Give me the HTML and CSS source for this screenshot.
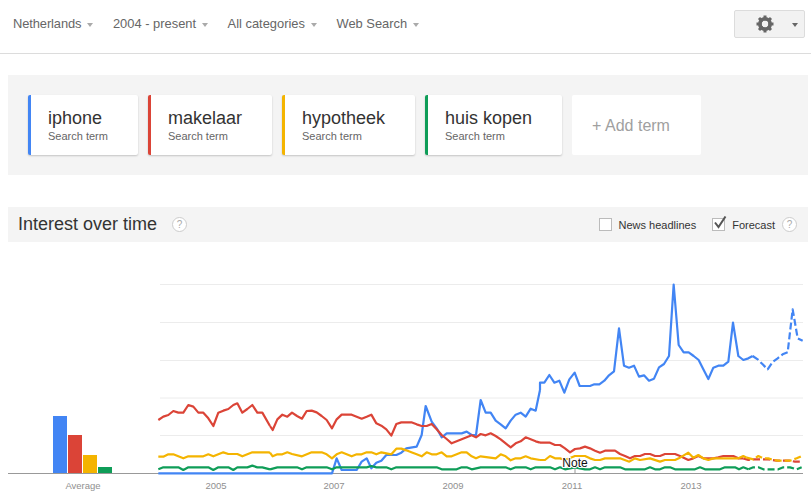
FILE: index.html
```html
<!DOCTYPE html>
<html lang="en">
<head>
    <meta charset="UTF-8">
    <meta name="viewport" content="width=device-width, initial-scale=1.0">
    <title>Google Trends</title>
    <link rel="stylesheet" href="styles.css">
</head>
<body>
    <header class="topbar">
        <div class="filter first">Netherlands<span class="caret"></span></div>
        <div class="filter">2004 - present<span class="caret"></span></div>
        <div class="filter">All categories<span class="caret"></span></div>
        <div class="filter">Web Search<span class="caret"></span></div>
        <button class="settings">
            <svg class="gear" viewBox="0 0 18 18" width="18" height="18">
                <circle cx="9" cy="9" r="5.2" fill="none" stroke="#666" stroke-width="3.6"/>
                <path d="M9 0.5V17.5M0.5 9H17.5M3 3L15 15M15 3L3 15" stroke="#666" stroke-width="3" fill="none" mask="url(#gearHole)"/>
                <mask id="gearHole">
                    <rect width="18" height="18" fill="#fff"/>
                    <circle cx="9" cy="9" r="3.4" fill="#000"/>
                </mask>
            </svg>
            <span class="caret dark"></span>
        </button>
    </header>

    <section class="terms">
        <div class="term blue"><div class="term-name">iphone</div><div class="term-type">Search term</div></div>
        <div class="term red"><div class="term-name">makelaar</div><div class="term-type">Search term</div></div>
        <div class="term yellow"><div class="term-name">hypotheek</div><div class="term-type">Search term</div></div>
        <div class="term green"><div class="term-name">huis kopen</div><div class="term-type">Search term</div></div>
        <div class="term add">+ Add term</div>
    </section>

    <section class="section-head">
        <h2>Interest over time</h2>
        <span class="help title-help">?</span>
        <div class="options">
            <span class="checkbox"></span>
            <span class="option-label news">News headlines</span>
            <span class="checkbox">
                <svg viewBox="0 0 16 16" width="16" height="16"><path d="M3 6.5L6.5 11L13.5 0.5" fill="none" stroke="#555" stroke-width="2"/></svg>
            </span>
            <span class="option-label">Forecast</span>
            <span class="help">?</span>
        </div>
    </section>

    <svg class="chart" viewBox="0 242 811 258" width="811" height="258">
        <g class="grid">
            <line x1="160" x2="803" y1="284.5" y2="284.5"/>
            <line x1="160" x2="803" y1="322.5" y2="322.5"/>
            <line x1="160" x2="803" y1="360.5" y2="360.5"/>
            <line x1="160" x2="803" y1="398" y2="398"/>
            <line x1="160" x2="803" y1="435.5" y2="435.5"/>
        </g>
        <line class="axis" x1="8" x2="803" y1="473.5" y2="473.5"/>

        <rect x="53" y="416" width="14" height="57" fill="#4285f4"/>
        <rect x="68" y="435" width="14" height="38" fill="#db4437"/>
        <rect x="83" y="455" width="14" height="18" fill="#f4b400"/>
        <rect x="98" y="467" width="14" height="6" fill="#0f9d58"/>

        <!-- series are traced in 3x crop coordinates, one group per crop -->
        <g transform="translate(0 390) scale(.33333)">
            <polyline class="s-blue" points="475,250 810,250"/>
            <polyline class="s-red" points="475,90 490,80 505,75 520,63 535,68 550,68 565,45 580,50 595,68 610,68 625,85 640,108 655,68 670,62 685,57 700,45 712,40 727,68 742,57 757,45 772,68 787,68 810,108"/>
            <polyline class="s-yellow" points="475,200 490,200 505,193 520,193 535,199 550,205 565,199 610,199 625,193 640,199 655,193 670,187 685,192 712,192 727,199 742,193 757,187 805,187 810,188"/>
            <polyline class="s-green" points="475,238 490,232 535,232 550,240 565,232 625,232 640,240 655,232 685,232 700,240 712,232 742,232 757,227 772,232 787,232 810,238"/>
        </g>
        <g transform="translate(270 390) scale(.33333)">
            <polyline class="s-blue" points="0,250 186,250 200,205 215,240 260,240 275,215 290,205 304,235 319,218 334,212 349,195 379,195 394,188 409,175 440,170 455,135 467,48 485,95 500,115 515,142 530,130 575,130 590,125 605,135 618,135 632,30 647,68 662,68 677,92 692,103 707,115 722,92 737,74 752,68 767,80 782,56 797,62 810,0"/>
            <polyline class="s-red" points="0,108 8,120 22,88 37,74 52,80 66,68 81,78 96,86 110,63 125,62 140,67 155,78 170,90 186,115 200,88 215,74 245,74 260,80 275,86 290,80 304,74 319,100 334,107 349,118 364,137 379,102 394,97 424,97 440,103 455,108 470,108 485,102 500,118 515,135 530,147 545,160 560,154 575,148 590,142 605,136 618,142 632,132 647,136 662,130 677,138 692,148 707,160 722,172 737,160 752,154 767,142 782,148 797,154 810,158"/>
            <polyline class="s-yellow" points="0,188 8,199 22,193 37,193 52,187 66,192 96,199 125,187 155,187 170,193 186,205 200,193 215,187 245,199 260,193 275,193 290,187 304,187 319,193 334,187 364,193 379,176 394,176 409,181 424,187 440,193 455,199 470,187 485,193 500,193 515,187 530,199 545,199 560,193 575,187 590,187 605,199 618,205 632,199 677,205 692,193 707,199 722,211 737,205 752,205 767,199 782,205 810,210"/>
            <polyline class="s-green" points="0,238 22,232 81,232 96,238 110,232 170,232 186,238 200,232 290,232 304,228 319,232 349,232 364,238 379,232 500,232 515,238 560,238 575,232 590,232 605,238 632,232 707,232 722,238 737,232 767,232 782,238 797,232 810,232"/>
        </g>
        <g transform="translate(540 270) scale(.33333)">
            <polyline class="s-blue" points="0,360 0,338 13,338 28,315 43,338 58,332 73,368 88,328 104,308 119,348 150,348 163,343 178,343 193,332 207,316 222,304 237,175 252,287 267,293 282,287 297,320 312,316 327,332 342,326 357,292 372,282 387,258 401,44 416,225 431,247 446,247 461,258 476,270 490,298 505,327 520,293 535,287 550,287 565,275 579,158 595,258 610,270 625,265 638,258"/>
            <polyline class="s-blue dashed" points="638,258 653,268 668,283 683,298 698,276 713,265 728,253 743,247 758,118 773,205 788,212"/>
        </g>
        <g transform="translate(540 390) scale(.33333)">
            <polyline class="s-red" points="0,158 30,158 45,165 60,165 75,175 90,187 105,177 120,175 135,170 150,175 165,182 180,188 195,182 225,182 240,192 255,198 270,205 285,198 300,198 315,192 330,192 345,198 360,198 375,192 405,192 420,198 445,210 460,205 475,198 490,205 520,205 535,202 550,198 580,198 595,205 610,205"/>
            <polyline class="s-red dashed" points="610,205 625,210 640,208 685,208 710,212 750,212 765,215 785,215"/>
            <polyline class="s-yellow" points="0,210 15,210 30,198 45,205 60,205 75,210 105,198 135,198 150,205 165,210 180,210 195,205 240,205 268,215 285,205 300,210 330,205 360,215 375,210 405,210 420,203 445,188 460,203 475,195 490,205 505,210 520,205 595,205 610,198 620,203"/>
            <polyline class="s-yellow dashed" points="620,203 640,208 655,198 670,205 685,205 700,210 715,212 750,212 770,205 785,198"/>
            <polyline class="s-green" points="0,232 30,232 45,238 60,232 75,238 105,232 135,238 150,238 165,232 180,238 195,232 240,232 255,238 315,238 330,232 345,238 360,238 375,232 390,232 405,238 465,238 480,232 495,238 540,238 555,232 585,232 597,238 610,232 625,238"/>
            <polyline class="s-green dashed" points="625,238 640,232 655,232 670,238 715,238 730,232 750,232 770,238 785,232"/>
        </g>

        <line class="note-tick" x1="575" x2="575" y1="469" y2="473"/>
        <text class="note" x="575" y="467">Note</text>

        <g class="labels">
            <text x="83" y="488.5">Average</text>
            <text x="216" y="488.5">2005</text>
            <text x="334" y="488.5">2007</text>
            <text x="453" y="488.5">2009</text>
            <text x="572" y="488.5">2011</text>
            <text x="691" y="488.5">2013</text>
        </g>
    </svg>
</body>
</html>
```

FILE: styles.css
```css
html, body {
    margin: 0;
    padding: 0;
    height: 500px;
    overflow: hidden;
    background: #fff;
    font-family: 'Liberation Sans', Arial, sans-serif;
}

.topbar {
    display: flex;
    align-items: center;
    height: 47px;
    padding: 0 6px 6px 13px;
    border-bottom: 1px solid #dcdcdc;
    box-sizing: content-box;
}

.filter {
    display: flex;
    align-items: center;
    margin-right: 19.5px;
    font-size: 12.9px;
    color: #666;
}

.filter.first {
    letter-spacing: -0.1px;
}

.caret {
    display: inline-block;
    width: 0;
    height: 0;
    margin-left: 6px;
    margin-top: 2px;
    border-left: 3.5px solid transparent;
    border-right: 3.5px solid transparent;
    border-top: 4px solid #aaa;
}

.caret.dark {
    border-top-color: #666;
    margin-left: 0;
}

.settings {
    display: flex;
    align-items: center;
    justify-content: space-between;
    width: 71px;
    height: 28px;
    margin-left: auto;
    padding: 0 6px 0 21px;
    background: #f2f2f2;
    border: 1px solid #dcdcdc;
    border-radius: 2px;
    box-sizing: border-box;
}

.gear {
    display: block;
}

.terms {
    display: flex;
    gap: 10px;
    width: 800px;
    height: 100px;
    margin: 21px 0 32px 8px;
    padding: 20px;
    background: #f4f4f4;
    box-sizing: border-box;
}

.term {
    height: 60px;
    padding: 12px 30px 0 17px;
    background: #fff;
    border-left: 3px solid transparent;
    border-radius: 2px;
    box-shadow: 0 1px 2px rgba(0,0,0,0.2);
    box-sizing: border-box;
}

.term.blue { border-left-color: #4285f4; }
.term.red { border-left-color: #db4437; }
.term.yellow { border-left-color: #f4b400; }
.term.green { border-left-color: #0f9d58; }

.term-name {
    font-size: 18px;
    line-height: 22px;
    color: #333;
}

.term-type {
    font-size: 11px;
    line-height: 14px;
    color: #666;
}

.term.add {
    display: flex;
    align-items: center;
    padding: 2px 31px 0 20px;
    border-left: none;
    box-shadow: none;
    font-size: 16px;
    color: #a0a0a0;
}

.section-head {
    display: flex;
    align-items: center;
    width: 800px;
    height: 35px;
    margin-left: 8px;
    padding: 0 11px 0 10px;
    background: #f4f4f4;
    box-sizing: border-box;
}

h2 {
    margin: 0;
    font-size: 18px;
    font-weight: normal;
    color: #333;
}

.help {
    display: block;
    width: 13px;
    height: 13px;
    background: #fff;
    border: 1px solid #ccc;
    border-radius: 50%;
    font-size: 10px;
    line-height: 13px;
    text-align: center;
    color: #aaa;
}

.title-help {
    margin-left: 15px;
}

.options {
    display: flex;
    align-items: center;
    margin-left: auto;
}

.checkbox {
    display: block;
    position: relative;
    width: 11px;
    height: 11px;
    background: #fff;
    border: 1px solid #bbb;
}

.checkbox svg {
    position: absolute;
    left: -1px;
    top: -3px;
}

.option-label {
    margin-left: 7px;
    margin-right: 7px;
    font-size: 11px;
    color: #333;
}

.option-label.news {
    margin-right: 16px;
}

.chart {
    display: block;
}

.grid line {
    stroke: #ececec;
    stroke-width: 1;
}

.axis {
    stroke: #999;
    stroke-width: 1;
}

polyline {
    fill: none;
    stroke-width: 2.2;
    stroke-linejoin: round;
    vector-effect: non-scaling-stroke;
}

.s-blue { stroke: #4285f4; }
.s-red { stroke: #db4437; }
.s-yellow { stroke: #f4b400; }
.s-green { stroke: #0f9d58; }

.dashed {
    stroke-dasharray: 7 3;
}

.note {
    font-size: 12px;
    text-anchor: middle;
    fill: #111;
    stroke: #fff;
    stroke-width: 2px;
    paint-order: stroke;
}

.note-tick {
    stroke: #999;
}

.labels text {
    font-size: 9.5px;
    text-anchor: middle;
    fill: #909090;
}
```
